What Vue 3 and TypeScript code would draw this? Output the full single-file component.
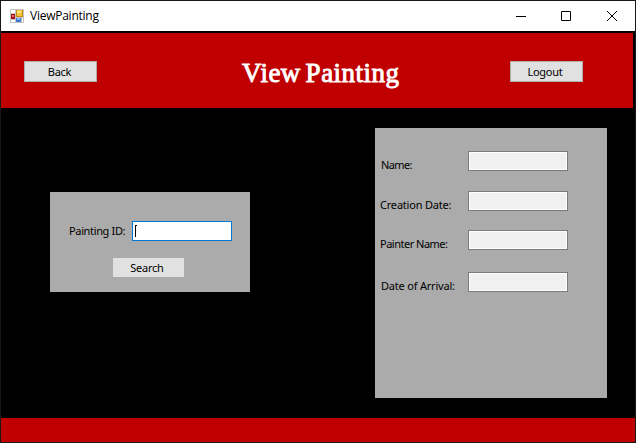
<script setup lang="ts">
import { ref } from 'vue'

interface Field {
  key: string
  label: string
  value: string
}

const paintingId = ref('')
const fields = ref<Field[]>([
  { key: 'name', label: 'Name:', value: '' },
  { key: 'creation', label: 'Creation Date:', value: '' },
  { key: 'painter', label: 'Painter Name:', value: '' },
  { key: 'arrival', label: 'Date of Arrival:', value: '' },
])
</script>

<template>
  <div class="window">
    <header class="titlebar">
      <svg class="app-icon" width="14" height="14" viewBox="0 0 14 14" shape-rendering="crispEdges">
        <rect width="14" height="14" fill="#c4c4c4" />
        <rect x="1" y="1" width="4" height="3" fill="#fff" />
        <rect x="1" y="11" width="4" height="2" fill="#fff" />
        <rect x="12" y="9" width="1" height="4" fill="#fff" />
        <rect x="1" y="5" width="4" height="5" fill="#a81414" />
        <rect x="2" y="6" width="2" height="2" fill="#e07868" />
        <rect x="6" y="1" width="7" height="7" fill="#c88a10" />
        <rect x="7" y="1" width="5" height="6" fill="#f6c637" />
        <rect x="7" y="2" width="4" height="2" fill="#ffe58a" />
        <rect x="6" y="9" width="5" height="4" fill="#3c78d8" />
        <rect x="7" y="9" width="3" height="2" fill="#86b4f4" />
      </svg>
      <span class="caption">ViewPainting</span>
      <div class="controls">
        <svg class="minimize" width="10" height="10" viewBox="0 0 10 10"><path d="M0 5.5h10" /></svg>
        <svg width="10" height="10" viewBox="0 0 10 10"><path d="M.5 .5h9v9h-9z" /></svg>
        <svg width="10" height="10" viewBox="0 0 10 10"><path d="M0 0l10 10M10 0l-10 10" /></svg>
      </div>
    </header>

    <section class="banner">
      <button class="btn bordered back">Back</button>
      <h1>View Painting</h1>
      <button class="btn bordered logout">Logout</button>
    </section>

    <main class="content">
      <form class="search" @submit.prevent>
        <div class="search-row">
          <label class="label id-label" for="pid">Painting ID:</label>
          <div class="id-box">
            <svg class="caret" width="2" height="12" viewBox="0 0 2 12" shape-rendering="crispEdges">
              <path d="M0 0h2v1h-1v11h-1z" />
            </svg>
            <input id="pid" v-model="paintingId" type="text" />
          </div>
        </div>
        <button class="btn find">Search</button>
      </form>

      <div class="details">
        <div v-for="f in fields" :key="f.key" class="row" :class="f.key">
          <span class="label">{{ f.label }}</span>
          <input :value="f.value" class="readonly" type="text" readonly />
        </div>
      </div>
    </main>

    <footer class="footer"></footer>
  </div>
</template>

<style>
body {
  margin: 0;
  overflow: hidden;
}
</style>

<style scoped>
.window {
  box-sizing: border-box;
  width: 636px;
  height: 443px;
  border: 1px solid #181818;
  background: #000;
  display: flex;
  flex-direction: column;
  font-family: "Noto Sans", sans-serif;
  font-size: 11px;
  color: #000;
}
.titlebar {
  height: 30px;
  flex: none;
  background: #fff;
  display: flex;
  align-items: center;
  padding-left: 9px;
}
.app-icon {
  margin-right: 6px;
}
.caption {
  font-family: "Open Sans", sans-serif;
  font-size: 12px;
  letter-spacing: -0.25px;
  line-height: 16px;
}
.controls {
  margin-left: auto;
  display: flex;
  gap: 36px;
  padding-right: 18px;
}
.controls svg {
  display: block;
  fill: none;
  stroke: #000;
}
.controls .minimize {
  margin-right: -1px;
}
.banner {
  box-sizing: border-box;
  margin: 2px 2px 0 0;
  height: 75px;
  flex: none;
  background: #c00000;
  display: flex;
  align-items: flex-start;
  padding: 28px 50px 0 23px;
}
h1 {
  margin: -4px 0 0 145px;
  width: 268px;
  font: normal 27px/32px "Liberation Serif", serif;
  letter-spacing: 0.5px;
  word-spacing: -2.5px;
  -webkit-text-stroke: 0.9px #fff;
  color: #fff;
  white-space: nowrap;
}
.btn {
  box-sizing: border-box;
  border: 0;
  padding: 0;
  background: #e1e1e1;
  font: inherit;
  letter-spacing: -0.25px;
  line-height: 15px;
  color: #000;
  display: block;
  flex: none;
}
.bordered {
  width: 73px;
  height: 21px;
  border: 1px solid #adadad;
}
.back {
  padding-right: 2px;
}
.logout {
  padding-right: 3px;
}
.content {
  flex: none;
  height: 310px;
  display: flex;
  align-items: flex-start;
}
.search {
  box-sizing: border-box;
  width: 200px;
  height: 100px;
  margin: 84px 125px 0 49px;
  padding: 29px 18px 0 19px;
  background: #ababab;
}
.search-row {
  display: flex;
}
.label {
  line-height: 16px;
  letter-spacing: -0.2px;
  white-space: nowrap;
  flex: none;
}
.id-label {
  width: 63px;
  padding-top: 2px;
  letter-spacing: -0.35px;
}
.id-box {
  box-sizing: border-box;
  width: 100px;
  height: 20px;
  border: 1px solid #0078d7;
  background: #fff;
  display: flex;
  padding: 3px 2px;
}
.caret {
  flex: none;
}
.id-box input {
  flex: 1;
  min-width: 0;
  border: 0;
  padding: 0;
  outline: 0;
  background: transparent;
  font: inherit;
}
.find {
  width: 71px;
  height: 19px;
  margin: 17px 0 0 44px;
  padding-right: 3px;
}
.details {
  box-sizing: border-box;
  width: 232px;
  height: 270px;
  margin-top: 20px;
  padding: 23px 39px 0 6px;
  background: #ababab;
}
.row {
  display: flex;
  justify-content: space-between;
  height: 20px;
  margin-bottom: 20px;
}
.row .label {
  padding-top: 6px;
}
.name .label {
  letter-spacing: -0.6px;
}
.creation {
  margin-bottom: 19px;
}
.creation .label,
.painter .label {
  margin-left: -1px;
}
.painter .label {
  letter-spacing: -0.5px;
}
.painter {
  margin-bottom: 22px;
}
.readonly {
  box-sizing: border-box;
  width: 100px;
  height: 20px;
  border: 1px solid #7a7a7a;
  background: #f0f0f0;
  box-shadow: inset 0 0 0 1px #fff;
  border-radius: 0;
  padding: 2px;
  outline: 0;
  font: inherit;
}
.footer {
  flex: 1;
  background: #c00000;
}
</style>
